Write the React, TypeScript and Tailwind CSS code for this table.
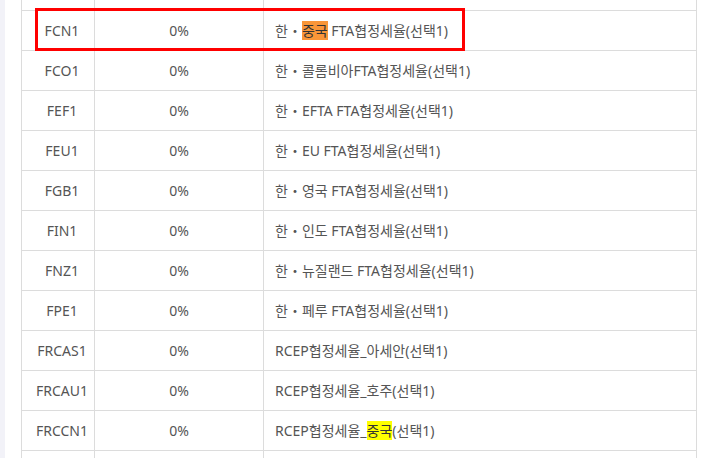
import React from 'react'

type Row = { code: string; rate: string; name: React.ReactNode }

const orange = (t: string) => <span className="bg-[#f99638] text-[#333]">{t}</span>
const yellow = (t: string) => <span className="bg-[#ffff00] text-[#333]">{t}</span>

const rows: Row[] = [
  { code: 'FCN1', rate: '0%', name: <>한・{orange('중국')} FTA협정세율(선택1)</> },
  { code: 'FCO1', rate: '0%', name: '한・콜롬비아FTA협정세율(선택1)' },
  { code: 'FEF1', rate: '0%', name: '한・EFTA FTA협정세율(선택1)' },
  { code: 'FEU1', rate: '0%', name: '한・EU FTA협정세율(선택1)' },
  { code: 'FGB1', rate: '0%', name: '한・영국 FTA협정세율(선택1)' },
  { code: 'FIN1', rate: '0%', name: '한・인도 FTA협정세율(선택1)' },
  { code: 'FNZ1', rate: '0%', name: '한・뉴질랜드 FTA협정세율(선택1)' },
  { code: 'FPE1', rate: '0%', name: '한・페루 FTA협정세율(선택1)' },
  { code: 'FRCAS1', rate: '0%', name: 'RCEP협정세율_아세안(선택1)' },
  { code: 'FRCAU1', rate: '0%', name: 'RCEP협정세율_호주(선택1)' },
  { code: 'FRCCN1', rate: '0%', name: <>RCEP협정세율_{yellow('중국')}(선택1)</> },
]

const cell = 'border border-[#dcdcdc] p-0'

function BlankRow() {
  // rows scrolled out of view above / below
  return (
    <tr className="h-10">
      <td className={cell} />
      <td className={cell} />
      <td className={cell} />
    </tr>
  )
}

export default function App() {
  return (
    <div
      className="flex h-[458px] w-[707px] overflow-hidden bg-white text-[14px] text-[#555]"
      style={{ fontFamily: '"Noto Sans", "Noto Sans CJK KR", sans-serif' }}
    >
      <div className="w-[5px] shrink-0 bg-[#f2f2f8]" />
      <div className="relative ml-[16px] -mt-[30px] w-[676px] self-start">
        <table className="w-full table-fixed border-collapse">
          <colgroup>
            <col className="w-[73px]" />
            <col className="w-[169px]" />
            <col />
          </colgroup>
          <tbody>
            <BlankRow />
            {rows.map((r) => (
              <tr key={r.code} className="h-10">
                <td className={`${cell} pl-2 text-center`}>{r.code}</td>
                <td className={`${cell} text-center`}>{r.rate}</td>
                <td className={`${cell} pl-[11px] whitespace-nowrap`}>{r.name}</td>
              </tr>
            ))}
            <BlankRow />
          </tbody>
        </table>
        <div className="pointer-events-none absolute left-[14px] top-[38px] h-[43px] w-[430px] border-[3px] border-[#ff0000]" />
      </div>
    </div>
  )
}
